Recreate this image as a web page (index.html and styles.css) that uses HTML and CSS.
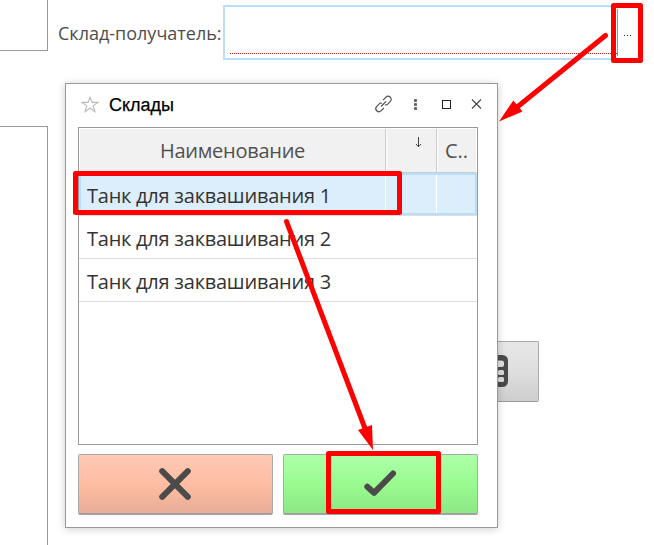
FILE: index.html
```html
<!DOCTYPE html>
<html lang="ru">
<head>
<meta charset="utf-8">
<title>Склады</title>
<link rel="stylesheet" href="styles.css">
</head>
<body>
<div class="page">
  <aside class="side">
    <div class="panel panel-top"></div>
    <div class="panel panel-main"></div>
  </aside>
  <main class="form">
    <div class="field-row">
      <label class="label">Склад-получатель:</label>
      <div class="field">
        <div class="field-input"></div>
        <button class="field-more" aria-label="Выбрать"><i></i><i></i><i></i></button>
      </div>
    </div>
    <button class="calc" aria-label="Калькулятор">
      <svg width="30" height="34" viewBox="0 0 30 34">
        <rect x="0" y="1" width="27" height="32" rx="5.500" fill="#4b4b4b"/>
        <rect x="4" y="6.500" width="19" height="6.500" rx="2.500" fill="#e2e2e2"/>
        <g fill="#dedede"><rect x="17" y="16" width="6" height="5" rx="1.500"/><rect x="17" y="23" width="6" height="5" rx="1.500"/><rect x="10" y="16" width="5" height="5" rx="1.500"/><rect x="10" y="23" width="5" height="5" rx="1.500"/></g>
      </svg>
    </button>
  </main>
</div>

<section class="dialog">
  <header class="titlebar">
    <svg class="star" width="18" height="17" viewBox="0 0 18 17"><path d="M9 1.3 11 6.4H17L12.2 9.9 14 15.6 9 12.2 4 15.6 5.8 9.9 1 6.4H7Z" fill="none" stroke="#b7b9bd" stroke-width="1.1"/></svg>
    <h1 class="title">Склады</h1>
    <svg class="tools" width="106" height="18" viewBox="0 0 106 18">
      <g fill="none" stroke="#4a4a4a" stroke-width="1.1">
        <path transform="translate(.5 0)" d="M7.6 5 10.3 2.3C13.3-.7 17.7 3.7 14.7 6.7L12.3 9.1Q11 10.4 9.4 9.8M8.4 13 5.7 15.7C2.7 18.7-1.7 14.3 1.3 11.3L3.7 8.9Q5 7.6 6.6 8.2M5.5 11.5 10.6 6.4"/>
        <path d="M97 4.500 106 13.500M106 4.500 97 13.500" stroke-width="1.2"/>
      </g>
      <g fill="#666"><rect x="39" y="4" width="3" height="3" rx=".8"/><rect x="39" y="8" width="3" height="3" rx=".8"/><rect x="39" y="12" width="3" height="3" rx=".8"/></g>
      <rect x="67.500" y="5.500" width="8" height="8" fill="none" stroke="#222"/>
    </svg>
  </header>
  <div class="table">
    <div class="row head">
      <div class="cell"><span class="head-text">Наименование</span></div>
      <div class="cell sort"><svg width="7" height="11" viewBox="0 0 7 11"><path d="M3.500 0V9.500M1 7 3.500 9.800 6 7" fill="none" stroke="#444"/></svg></div>
      <div class="cell last">С..</div>
    </div>
    <div class="row selected"><div class="cell"><span class="name">Танк для заквашивания 1</span></div><div class="cell"></div><div class="cell"></div></div>
    <div class="row"><div class="cell"><span class="name">Танк для заквашивания 2</span></div></div>
    <div class="row"><div class="cell"><span class="name">Танк для заквашивания 3</span></div></div>
  </div>
  <footer class="actions">
    <button class="action cancel" aria-label="Отмена"><svg width="34" height="34" viewBox="0 0 34 34"><path d="M4.2 4.2 29.8 29.8M29.8 4.2 4.2 29.8"/></svg></button>
    <button class="action accept" aria-label="Выбрать"><svg width="34" height="34" viewBox="0 0 34 34"><path d="M4.300 19.800 11 25.800 30 6.500"/></svg></button>
  </footer>
</section>

<svg class="marks" width="654" height="545" viewBox="0 0 654 545">
  <g fill="none" stroke="#f00" stroke-width="5" stroke-linejoin="round">
    <rect x="613.5" y="5.5" width="27" height="55"/>
    <rect x="75.5" y="173.5" width="324" height="39"/>
    <rect x="328.5" y="453.5" width="110" height="58"/>
    <path d="M605.5 35.5 516 108M286.500 221.500 366 431" stroke-linecap="round"/>
  </g>
  <path d="M499 121.500 513.300 100.500 522.500 111.500ZM373 450 358 430 372 425Z" fill="#f00"/>
</svg>
</body>
</html>
```
FILE: styles.css
```css
* { box-sizing: border-box; }
body {
  margin: 0;
  width: 654px;
  height: 545px;
  overflow: hidden;
  position: relative;
  background: #fff;
  font-family: "Open Sans", "Noto Sans", sans-serif;
}
button { padding: 0; font: inherit; }
svg { display: block; }
.page { display: flex; height: 545px; }
.side { width: 48px; display: flex; flex-direction: column; gap: 75px; }
.panel { border: solid #999; }
.panel-top { height: 51px; border-width: 0 1px 1px 0; }
.panel-main { flex: 1; border-width: 1px 1px 0 0; }
.form { flex: 1; padding: 5px 12px 0 10px; }
.field-row { display: flex; height: 55px; }
.label {
  width: 165px;
  line-height: 56px;
  font-size: 18px;
  color: #4d4d4d;
  white-space: nowrap;
}
.field { flex: 1; display: flex; border: 2px solid #b9defb; padding: 2px 0 2px 5px; }
.field-input {
  flex: 1;
  height: 45px;
  background: repeating-linear-gradient(90deg, #b22 0 1px, #fff 1px 2px) bottom / 100% 1px no-repeat;
}
.field-more {
  width: 23px;
  border: 0;
  border-left: 1px solid #999;
  background: none;
  display: flex;
  justify-content: center;
  align-items: center;
  gap: 2px;
  padding-right: 4px;
}
.field-more i { width: 1px; height: 1px; background: #333; margin-top: 6px; }
.calc {
  display: flex;
  align-items: center;
  width: 60px;
  height: 61px;
  margin: 281px 0 0 421px;
  border: 1px solid #aaa;
  border-bottom-color: #999;
  border-radius: 2px;
  background: linear-gradient(#e7e7e7, #dedede 50%, #cecece);
}
.calc svg { margin: -2px 0 0 1px; }
.dialog {
  position: absolute;
  left: 65px;
  top: 83px;
  width: 433px;
  height: 445px;
  padding: 0 19px 0 12px;
  border: 1px solid #999;
  background: #fff;
  box-shadow: 0 1px 8px rgba(0, 0, 0, .2);
}
.titlebar { display: flex; align-items: center; height: 43px; padding-bottom: 2px; }
.star { margin: -1px 0 0 3px; }
.title {
  flex: 1;
  margin: 1px 0 0 10px;
  font: 400 18px "Liberation Sans", sans-serif;
  -webkit-text-stroke: .25px #000;
}
.tools { margin: -2px -3px 0 0; overflow: visible; }
.table { width: 400px; height: 318px; border: 1px solid #999; }
.row {
  display: grid;
  grid-template-columns: 307px 51px 40px;
  height: 43px;
  border-bottom: 1px solid #dedede;
}
.cell { display: flex; align-items: center; font-size: 20px; color: #333; white-space: nowrap; }
.head {
  grid-template-columns: 306px 51px 39px;
  height: 45px;
  border: 1px solid #fff;
  border-bottom-color: #ccc;
  background: #f1f1f1;
}
.head .cell { justify-content: center; color: #505050; border-right: 1px solid #ccc; }
.head .cell + .cell { box-shadow: inset 1px 0 #fff; }
.head .cell.last { border-right: 0; }
.head .sort { align-items: flex-start; padding: 8px 0 0 14px; }
.selected { grid-template-columns: 306px 51px 41px; background: #dcedfc; box-shadow: inset 0 0 0 2px #b9defb; }
.selected .cell + .cell { border-left: 1px solid #fff; margin: 2px 0; }
.name { padding: 2px 0 0 8px; letter-spacing: -.24px; }
.head-text { letter-spacing: -.27px; }
.actions { display: grid; grid-template-columns: 195px 195px; gap: 10px; margin-top: 9px; }
.action {
  display: flex;
  align-items: center;
  justify-content: center;
  height: 61px;
  padding-right: 2px;
  border: 1px solid #aaa;
  border-bottom: 2px solid #a1a1a1;
  border-radius: 2px;
}
.action path { fill: none; stroke: #4b4b4b; stroke-width: 6; stroke-linecap: round; stroke-linejoin: round; }
.cancel { background: linear-gradient(#ffc9b5, #fdbda2 50%, #e9ad97); }
.accept { background: linear-gradient(#adffa7, #99fb90 50%, #8be884); }
.marks { position: absolute; left: 0; top: 0; pointer-events: none; }
```
